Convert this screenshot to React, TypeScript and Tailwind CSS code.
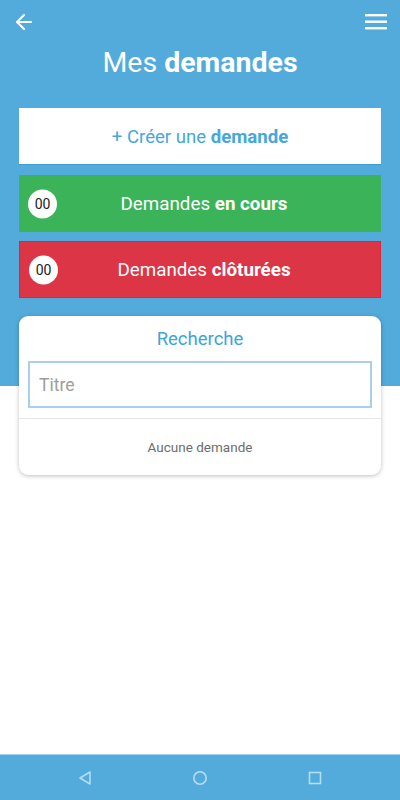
import React from 'react';
import { ArrowLeft } from 'lucide-react';

const Counter: React.FC<{ value: string }> = ({ value }) => (
    <span className="absolute left-[9px] top-1/2 -translate-y-1/2 w-[29px] h-[29px] rounded-full bg-white text-[#222] text-[14px] font-normal flex items-center justify-center">
        {value}
    </span>
);

const App: React.FC = () => {
    return (
        <div className="h-screen flex flex-col font-['Roboto',sans-serif] bg-white">
            <div className="flex-1 bg-[linear-gradient(to_bottom,#52abdb_386px,#ffffff_386px)]">
                {/* top bar */}
                <div className="flex items-center justify-between px-[14px] pt-[7px] h-[36px]">
                    <ArrowLeft size={24} strokeWidth={2} className="text-white -ml-[2px]" />
                    <svg width="22" height="17" viewBox="0 0 22 17" className="text-white -mr-[1px]">
                        <rect x="0" y="1" width="22" height="2.4" fill="currentColor" />
                        <rect x="0" y="7.5" width="22" height="2.4" fill="currentColor" />
                        <rect x="0" y="14" width="22" height="2.4" fill="currentColor" />
                    </svg>
                </div>

                <h1 className="text-center text-white text-[28.5px] mt-[9px] leading-[36px]">
                    Mes <span className="font-bold">demandes</span>
                </h1>

                <div className="px-[19px] mt-[27px] flex flex-col">
                    <button className="h-[57px] pt-[3px] bg-white border-b border-[#3d9fd6] text-[#45a8dd] text-[18.6px]">
                        + Créer une <span className="font-bold">demande</span>
                    </button>
                    <button className="relative mt-[10px] h-[57px] pt-[2px] pl-[8px] bg-[#3bb358] text-white text-[18.8px]">
                        <Counter value="00" />
                        Demandes <span className="font-bold">en cours</span>
                    </button>
                    <button className="relative mt-[9px] h-[57px] pt-[2px] pl-[8px] bg-[#dc3545] border border-[#e8232f] text-white text-[18.8px]">
                        <Counter value="00" />
                        Demandes <span className="font-bold">clôturées</span>
                    </button>
                </div>

                {/* search card */}
                <div className="mx-[19px] mt-[18px] bg-white rounded-[9px] shadow-[0_1px_4px_rgba(0,0,0,0.25)]">
                    <div className="text-center text-[#3aa6dc] text-[18.5px] pt-[12px] leading-[22px]">Recherche</div>
                    <div className="px-[9px] pt-[11px] pb-[10px]">
                        <input
                            placeholder="Titre"
                            className="w-full h-[47px] border-2 border-[#a9cfea] px-[9px] text-[17.5px] placeholder:text-[#9e9e9e] outline-none"
                        />
                    </div>
                    <div className="border-t border-[#e6e6e6] h-[57px] flex items-center justify-center text-[13.5px] text-[#6d6d6d]">
                        Aucune demande
                    </div>
                </div>
            </div>

            {/* android nav */}
            <div className="h-[46px] bg-[#52abdb] border-t border-[#9fd0ec] flex items-center justify-center gap-[100px]">
                <svg width="14" height="16" viewBox="0 0 14 16" className="text-[#b5dcf2]">
                    <path d="M12 2 L2 8 L12 14 Z" fill="none" stroke="currentColor" strokeWidth="1.6" strokeLinejoin="round" />
                </svg>
                <svg width="16" height="16" viewBox="0 0 16 16" className="text-[#b5dcf2]">
                    <circle cx="8" cy="8" r="6.2" fill="none" stroke="currentColor" strokeWidth="1.6" />
                </svg>
                <svg width="14" height="14" viewBox="0 0 14 14" className="text-[#b5dcf2]">
                    <rect x="1.5" y="1.5" width="11" height="11" fill="none" stroke="currentColor" strokeWidth="1.6" />
                </svg>
            </div>
        </div>
    );
};

export default App;
